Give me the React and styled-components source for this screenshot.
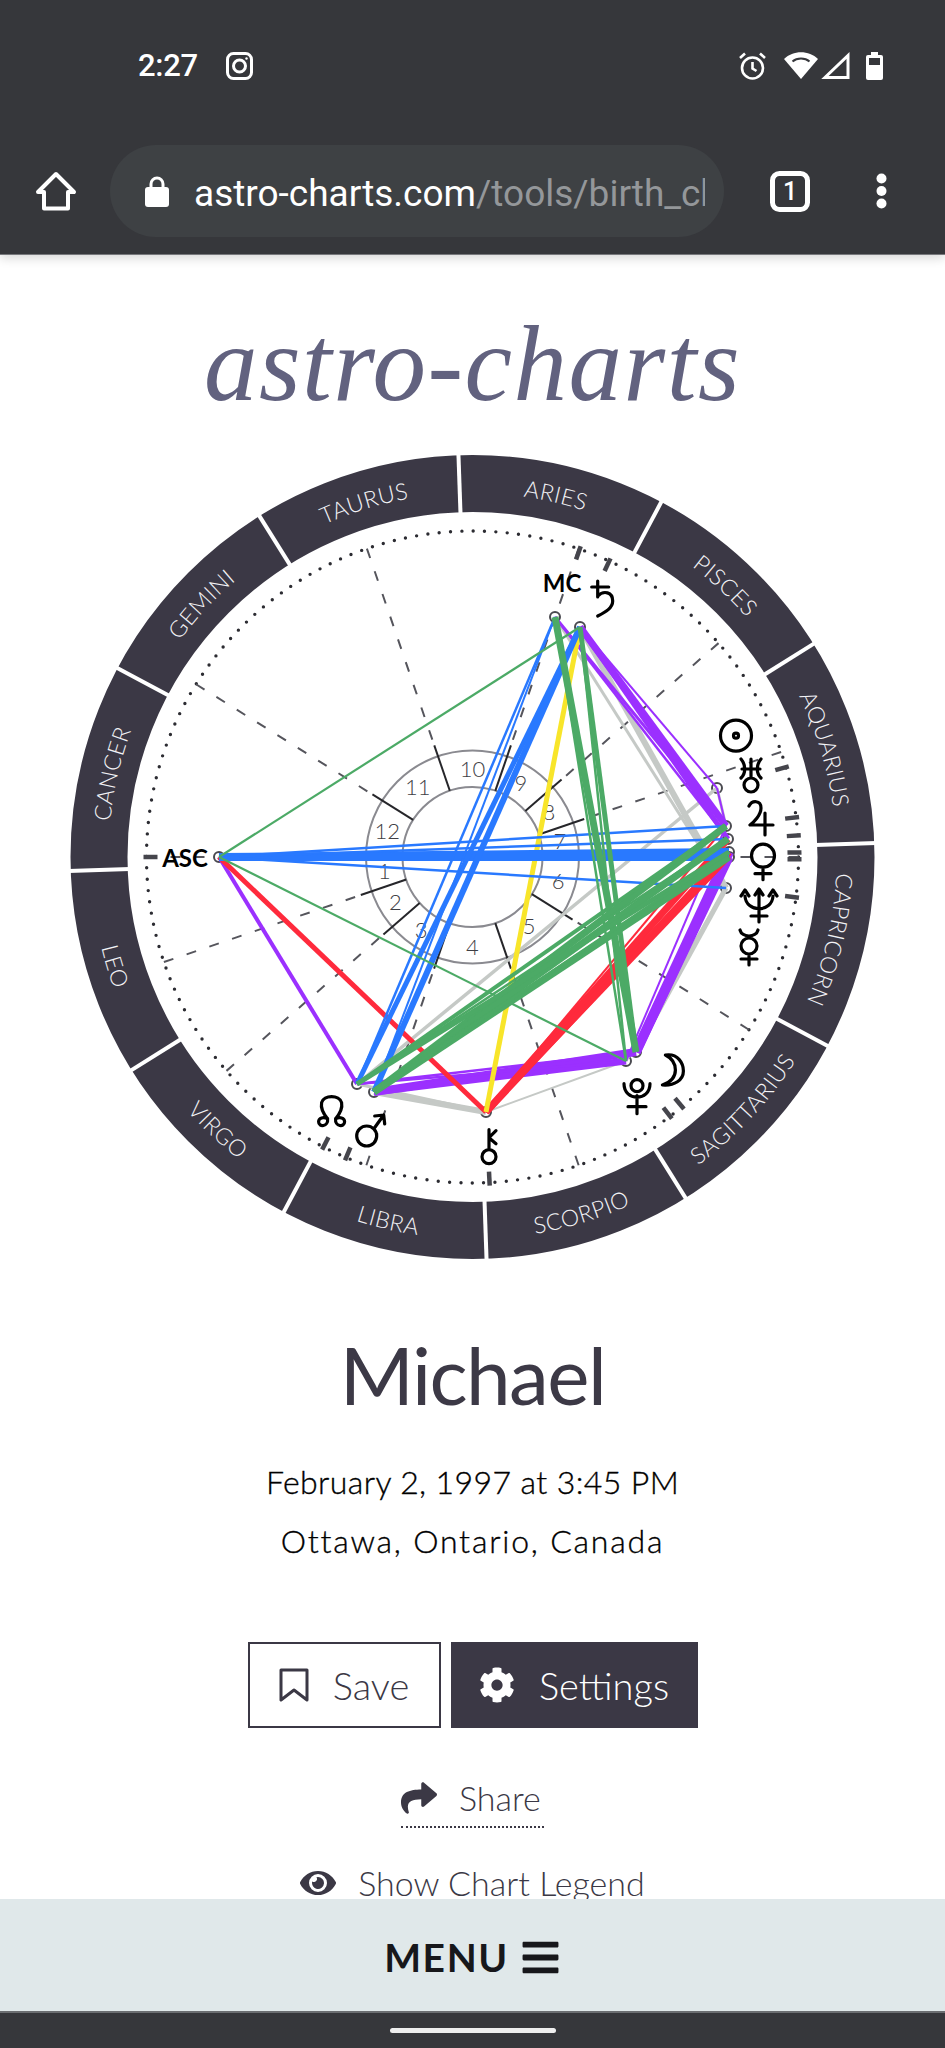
import React from "react";
import styled, { createGlobalStyle } from "styled-components";
import { FaCog, FaShare, FaEye, FaBars } from "react-icons/fa";

const Global = createGlobalStyle`
  html, body { margin: 0; padding: 0; background: #fff; }
  body { font-family: Lato, "Open Sans", sans-serif; }
`;

const Screen = styled.div`
  width: 945px; height: 2048px; display: flex; flex-direction: column; overflow: hidden; background: #fff;
`;
const Header = styled.header`
  flex: 0 0 255px; background: #36373b; display: flex; flex-direction: column; position: relative; z-index: 2;
  box-shadow: 0 3px 10px rgba(0,0,0,.16); border-bottom: 1px solid #77787c; box-sizing: border-box;
`;
const StatusRow = styled.div`
  height: 145px; box-sizing: border-box; padding: 52px 62px 0 138px; display: flex; align-items: flex-start; color: #fff;
`;
const Clock = styled.span`
  font: 500 31px/28px Roboto, sans-serif; width: 88px; letter-spacing: -.3px;
`;
const StatusRight = styled.div`
  margin-left: auto; display: flex; align-items: flex-start;
`;
const Toolbar = styled.div`
  height: 92px; display: flex; align-items: center; padding-left: 35px;
`;
const UrlPill = styled.div`
  width: 614px; height: 92px; margin: 0 46px 0 33px; border-radius: 46px; background: #3e4144; box-sizing: border-box;
  padding: 0 19px 0 35px; display: flex; align-items: center; gap: 25px;
`;
const UrlText = styled.div`
  flex: 1; overflow: hidden; white-space: nowrap; font: 400 37px/46px Roboto, sans-serif; color: #fff; padding-top: 5px;
  span { color: #94979a; }
`;
const Main = styled.main`
  flex: 1; min-height: 0; overflow: hidden; display: flex; flex-direction: column; align-items: center;
  & > * { flex: none; }
`;
const Logo = styled.h1`
  margin: 0; height: 175px; box-sizing: border-box; padding-top: 57px; font: italic 400 107px/105px "Liberation Serif", serif;
  letter-spacing: 1.5px; color: #62627f; text-align: center; white-space: nowrap;
`;
const ChartSvg = styled.svg`
  display: block; width: 945px; height: 850px;
`;
const Name = styled.h2`
  margin: 54px 0 0; font: 400 80px/80px Lato, sans-serif; color: #3c3946; height: 80px; letter-spacing: -1.6px;
`;
const Detail = styled.p`
  margin: ${p => p.$first ? "38px" : "0"} 0 0; height: 59px; font: 300 32px/59px Lato, sans-serif; color: #000;
  -webkit-text-stroke: .35px #000; letter-spacing: ${p => p.$sp};
`;
const Buttons = styled.div`
  display: flex; gap: 10px; margin-top: 72px; height: 86px;
`;
const Button = styled.button`
  width: ${p => p.$w}px; height: 86px; box-sizing: border-box; border: 2px solid #3b3845; display: flex; align-items: center; justify-content: center;
  gap: ${p => p.$gap}px; font: 300 38px/1 Lato, sans-serif; padding: 0;
  background: ${p => p.$solid ? "#3b3845" : "#fff"}; color: ${p => p.$solid ? "#fff" : "#3b3845"};
`;
const ShareLink = styled.a`
  display: flex; align-items: center; gap: 22px; margin-top: 45px; height: 50px; width: 143px; box-sizing: content-box;
  padding-bottom: 3px; border-bottom: 2px dotted #3b3845; color: #3b3845; font: 300 34px/1 Lato, sans-serif;
`;
const LegendLink = styled.a`
  display: flex; align-items: center; gap: 22px; margin-top: 37px; color: #3b3845; font: 300 34px/1 Lato, sans-serif;
  white-space: nowrap;
`;
const MenuBar = styled.div`
  flex: 0 0 112px; background: #e0e8ea; display: flex; align-items: center; justify-content: center; gap: 11px;
  color: #17171b; font: 700 39px/1 Lato, sans-serif; letter-spacing: 1.6px; padding-top: 5px; box-sizing: border-box;
`;
const NavBar = styled.div`
  flex: 0 0 37px; background: #36373b; border-top: 2px solid #6b6e71; box-sizing: border-box; display: flex; justify-content: center; padding-top: 15px;
`;
const GestureBar = styled.div`
  width: 166px; height: 5px; border-radius: 3px; background: #eeeeee;
`;

const Ring = styled.circle`fill: none; stroke: #3b3845; stroke-width: 57;`;
const RingSep = styled.line`stroke: #fff; stroke-width: 4;`;
const RingLabel = styled.text`font: 300 23px Lato, sans-serif; fill: #f2f2f5; letter-spacing: .5px;`;
const Dots = styled.circle`fill: none; stroke: #2c2c32; stroke-width: 3.4; stroke-linecap: round; stroke-dasharray: 0 11.38;`;
const DashLine = styled.line`stroke: #55555c; stroke-width: 2; stroke-dasharray: 10 14;`;
const HouseCircle = styled.circle`fill: none; stroke: #8a8a90; stroke-width: 2;`;
const Spoke = styled.line`stroke: #26262a; stroke-width: 2;`;
const HouseNumber = styled.text`font: 300 22px Lato, sans-serif; fill: #3e3e44; text-anchor: middle; dominant-baseline: central;`;
const Tick = styled.line`stroke: #45454c; stroke-width: 4.5;`;
const Marker = styled.circle`fill: #fff; stroke: #4a4a50; stroke-width: 2;`;
const Aspect = styled.line`stroke: ${p => p.$c}; stroke-width: ${p => p.$w};`;
const PointLabel = styled.text`font: 700 24px Lato, sans-serif; fill: #000; text-anchor: middle; dominant-baseline: central;`;
const Glyph = styled.g`fill: none; stroke: #000; stroke-width: 3.2; stroke-linecap: round; stroke-linejoin: round;`;

const CX = 472.5, CY = 857;
const pol = (r, a) => {
  const t = (a * Math.PI) / 180;
  return [CX + r * Math.cos(t), CY - r * Math.sin(t)];
};

const signs = [
  ["ARIES", 77], ["PISCES", 47], ["AQUARIUS", 17], ["CAPRICORN", -13], ["SAGITTARIUS", -43], ["SCORPIO", -73],
  ["LIBRA", -103], ["VIRGO", -133], ["LEO", -163], ["CANCER", 167], ["GEMINI", 137], ["TAURUS", 107],
];
const cusps = [0, 18.8, 41, 71, 108.9, 148, 180, 198.8, 221, 251, 289, 328];
const numbers = [[1,188.5],[2,210],[3,234.8],[4,270],[5,-50.4],[6,-15.6],[7,11],[8,31],[9,57],[10,90],[11,128],[12,163]];
const ticks = [70.8, 65.2, 16, 7, 3.8, 0.8, -0.4, -7.1, -50, -52.7, -87, 247.2, 242.8, 180];

const P = {
  MC: [555, 617], SA: [580, 627], UR: [717, 788], JU: [726, 826], SU: [728, 839], VE: [729, 852], V2: [729, 857], NE: [726, 888],
  AS: [219, 857], MO: [636, 1052], PL: [626, 1061], CH: [486, 1112], MA: [374, 1092], NN: [357, 1084],
};
const G = "#4caa66", B = "#2979ff", V = "#9b30ff", R = "#ff2a3c", Y = "#f8e52a", S = "#c5c9c6";
const aspects = [
  ["SA","NE",S,6],["MC","NE",S,3],["UR","NN",S,3.5],["UR","JU",S,3],["NE","MO",S,5],["NE","PL",S,3],["MA","CH",S,6],["NN","CH",S,3],["CH","PL",S,2],
  ["SA","JU",V,7],["SA","SU",V,5],["MC","JU",V,3],["MC","SU",V,2.5],["SA","UR",V,2],["UR","JU",V,2],
  ["AS","NN",V,4],["MA","MO",V,8],["MA","PL",V,7],["NN","MO",V,2.5],["NN","PL",V,2.5],["MO","VE",V,10],["MO","V2",V,9],["PL","JU",V,2],
  ["AS","CH",R,5],["CH","SU",R,7],["CH","VE",R,7],["CH","V2",R,5],["CH","JU",R,2],
  ["SA","CH",Y,5],
  ["AS","VE",B,8],["AS","V2",B,8],["AS","JU",B,2.5],["AS","SU",B,2.5],["AS","NE",B,2.5],
  ["MC","NN",B,2.5],["SA","NN",B,5],["SA","MA",B,6],["MC","MA",B,2],
  ["AS","SA",G,2.2],["AS","PL",G,2.2],["MC","MO",G,7],["SA","MO",G,5],["MC","PL",G,2.5],["SA","PL",G,2.5],
  ["MA","JU",G,7],["MA","SU",G,7],["MA","V2",G,7],["NN","JU",G,4],["NN","SU",G,2.5],["NN","VE",G,5],["MA","VE",G,3],
];

const labelArc = (a, flip) => {
  const r = flip ? 382 : 364;
  const [x1, y1] = pol(r, flip ? a - 30 : a + 30);
  const [x2, y2] = pol(r, flip ? a + 30 : a - 30);
  return `M${x1} ${y1} A${r} ${r} 0 0 ${flip ? 0 : 1} ${x2} ${y2}`;
};

const glyphs = [
  [601.7, 598, "M-4 -17V-1M-10 -11H7M-4 -2C2 -8 11 -6 11 3C11 10 4 14 -4 18"],
  [736, 735.7, "M-15.5 0a15.5 15.5 0 1 0 31 0a15.5 15.5 0 1 0 -31 0M-2.5 0a2.5 2.5 0 1 0 5 0a2.5 2.5 0 1 0 -5 0"],
  [751, 775, "M0 3V-16M-9 -6H9M-10 -16C-5 -10 -5 -2 -10 3M10 -16C5 -10 5 -2 10 3M-7 10a7 7 0 1 0 14 0a7 7 0 1 0 -14 0"],
  [760, 818, "M-11 -12C-8 -18 1 -18 1 -10C1 -3 -6 4 -10 7H13M5 -5V17"],
  [763, 861.7, "M-11.5 -6a11.5 11.5 0 1 0 23 0a11.5 11.5 0 1 0 -23 0M0 6V18M-8 12H8"],
  [759, 905, "M-14 -9C-13 8 13 8 14 -9M0 -15V17M-8 11H8M-18 -9L-14 -15L-10 -9M-4 -10L0 -16L4 -10M10 -9L14 -15L18 -9"],
  [749, 947, "M-8 -1a8 8 0 1 0 16 0a8 8 0 1 0 -16 0M-9 -17C-7 -9 7 -9 9 -17M0 7V18M-8 12H8"],
  [671.4, 1070, "M-6 -15C7 -17 12 -6 12 1C12 10 3 16 -9 15C0 12 4 7 4 0C4 -7 0 -12 -6 -15Z"],
  [637, 1096.7, "M-6 -11a6 6 0 1 0 12 0a6 6 0 1 0 -12 0M-13 -13C-13 5 13 5 13 -13M0 -1V17M-9 10H9"],
  [489, 1146.7, "M-7 10a7 7 0 1 0 14 0a7 7 0 1 0 -14 0M0 3V-17M0 -9L7 -16M0 -9L7 -3"],
  [369.7, 1130, "M-13 6a10 10 0 1 0 20 0a10 10 0 1 0 -20 0M4 -1L14 -15M5 -14L14 -15L15 -6"],
  [331.6, 1111.7, "M-4 7C-9 1 -11 -4 -10 -9C-8 -17 8 -17 10 -9C11 -4 9 1 4 7M-4 7C-3 15 -13 16 -13 10C-13 6 -8 5 -4 7M4 7C3 15 13 16 13 10C13 6 8 5 4 7"],
];

const Chart = () => (
  <ChartSvg viewBox="0 430 945 850">
    <defs>
      {signs.map(([n, a], i) => <path key={n} id={`sign-${i}`} d={labelArc(a, i >= 4 && i <= 8)} />)}
    </defs>
    <Ring cx={CX} cy={CY} r={373.5} />
    {signs.map(([n, a]) => {
      const [x1, y1] = pol(343, a + 15), [x2, y2] = pol(404, a + 15);
      return <RingSep key={n} x1={x1} y1={y1} x2={x2} y2={y2} />;
    })}
    {signs.map(([n], i) => (
      <RingLabel key={n} textAnchor="middle">
        <textPath href={`#sign-${i}`} startOffset="50%">{n}</textPath>
      </RingLabel>
    ))}
    <Dots cx={CX} cy={CY} r={326} />
    {cusps.map(a => {
      const [x1, y1] = pol(326, a), [x2, y2] = pol(118, a);
      return <DashLine key={a} x1={x1} y1={y1} x2={x2} y2={y2} />;
    })}
    <HouseCircle cx={CX} cy={CY} r={106.5} />
    <HouseCircle cx={CX} cy={CY} r={70} />
    {cusps.map(a => {
      const [x1, y1] = pol(70, a), [x2, y2] = pol(118, a);
      return <Spoke key={a} x1={x1} y1={y1} x2={x2} y2={y2} />;
    })}
    {numbers.map(([n, a]) => {
      const [x, y] = pol(89, a);
      return <HouseNumber key={n} x={x} y={y}>{n}</HouseNumber>;
    })}
    {ticks.map(a => {
      const [x1, y1] = pol(315, a), [x2, y2] = pol(329, a);
      return <Tick key={a} x1={x1} y1={y1} x2={x2} y2={y2} />;
    })}
    {Object.entries(P).map(([k, [x, y]]) => <Marker key={k} cx={x} cy={y} r={5} />)}
    {aspects.map(([a, b, c, w], i) => (
      <Aspect key={i} x1={P[a][0]} y1={P[a][1]} x2={P[b][0]} y2={P[b][1]} $c={c} $w={w} />
    ))}
    <PointLabel x={185} y={857}>ASC</PointLabel>
    <PointLabel x={562} y={582}>MC</PointLabel>
    {glyphs.map(([x, y, d], i) => (
      <Glyph key={i} transform={`translate(${x} ${y})`}><path d={d} /></Glyph>
    ))}
  </ChartSvg>
);

const Instagram = () => (
  <svg width="27" height="28" viewBox="0 0 27 28" fill="none" stroke="#fff" strokeWidth="3" style={{ display: "block" }}>
    <rect x="1.5" y="1.5" width="24" height="25" rx="6" />
    <circle cx="13.5" cy="14" r="6" />
    <circle cx="20.5" cy="6.5" r="1.2" fill="#fff" stroke="none" />
  </svg>
);
const Alarm = () => (
  <svg width="29" height="28" viewBox="0 0 29 28" fill="none" stroke="#fff" strokeWidth="2.6" style={{ display: "block", marginRight: 17 }}>
    <circle cx="14.5" cy="16" r="10.5" />
    <path d="M14.5 10V16.5L18.5 19M2 6L7 1.5M27 6L22 1.5" />
  </svg>
);
const Wifi = () => (
  <svg width="34" height="27" viewBox="0 0 34 27" style={{ display: "block", marginRight: 3 }}>
    <path d="M17 27L0 7C9 -2 25 -2 34 7Z" fill="#fff" />
    <path d="M8.5 9.5C13 5.5 21 5.5 25.5 9.5" fill="none" stroke="#36373b" strokeWidth="2" />
  </svg>
);
const Signal = () => (
  <svg width="29" height="27" viewBox="0 0 29 27" style={{ display: "block", marginRight: 16 }}>
    <path d="M27 3.5V25.5H4Z" fill="none" stroke="#fff" strokeWidth="3" />
  </svg>
);
const Battery = () => (
  <svg width="17" height="28" viewBox="0 0 17 28" style={{ display: "block" }}>
    <rect x="5" width="7" height="3" fill="#fff" />
    <rect y="3" width="17" height="25" rx="2" fill="#fff" />
    <rect x="3" y="6" width="11" height="7" fill="#36373b" />
  </svg>
);
const Home = () => (
  <svg width="42" height="40" viewBox="0 0 42 40" style={{ flex: "none" }}>
    <path d="M21 3L39 21H33V37.5H9V21H3Z" fill="none" stroke="#fff" strokeWidth="4" strokeLinejoin="round" />
  </svg>
);
const Lock = () => (
  <svg width="24" height="31" viewBox="0 0 24 31" style={{ flex: "none" }}>
    <path d="M6 13V8a6 6 0 0 1 12 0V13" fill="none" stroke="#fff" strokeWidth="3" />
    <rect y="11" width="24" height="20" rx="3" fill="#fff" />
  </svg>
);
const Tab = () => (
  <svg width="40" height="41" viewBox="0 0 40 41" style={{ flex: "none", marginRight: 66 }}>
    <rect x="2.5" y="2.5" width="35" height="36" rx="7" fill="none" stroke="#fff" strokeWidth="5" />
    <text x="20" y="29" textAnchor="middle" fill="#fff" fontFamily="Roboto, sans-serif" fontWeight="500" fontSize="25">1</text>
  </svg>
);
const More = () => (
  <svg width="11" height="36" viewBox="0 0 11 36" style={{ flex: "none" }}>
    <circle cx="5.5" cy="5.5" r="5" fill="#fff" /><circle cx="5.5" cy="18" r="5" fill="#fff" /><circle cx="5.5" cy="30.5" r="5" fill="#fff" />
  </svg>
);
const BookmarkIcon = () => (
  <svg width="30" height="34" viewBox="0 0 30 34" fill="none" stroke="#3b3845" strokeWidth="3" strokeLinejoin="round">
    <path d="M2 2H28V32L15 22L2 32Z" />
  </svg>
);

export default function App() {
  return (
    <Screen>
      <Global />
      <Header>
        <StatusRow>
          <Clock>2:27</Clock>
          <Instagram />
          <StatusRight><Alarm /><Wifi /><Signal /><Battery /></StatusRight>
        </StatusRow>
        <Toolbar>
          <Home />
          <UrlPill>
            <Lock />
            <UrlText>astro-charts.com<span>/tools/birth_chart</span></UrlText>
          </UrlPill>
          <Tab />
          <More />
        </Toolbar>
      </Header>
      <Main>
        <Logo>astro-charts</Logo>
        <Chart />
        <Name>Michael</Name>
        <Detail $first $sp=".4px">February 2, 1997 at 3:45 PM</Detail>
        <Detail $sp="1.8px">Ottawa, Ontario, Canada</Detail>
        <Buttons>
          <Button $w={193} $gap={24}><BookmarkIcon />Save</Button>
          <Button $w={247} $solid $gap={24}><FaCog size={36} />Settings</Button>
        </Buttons>
        <ShareLink><FaShare size={36} />Share</ShareLink>
        <LegendLink><FaEye size={36} />Show Chart Legend</LegendLink>
      </Main>
      <MenuBar>MENU <FaBars size={41} /></MenuBar>
      <NavBar><GestureBar /></NavBar>
    </Screen>
  );
}
